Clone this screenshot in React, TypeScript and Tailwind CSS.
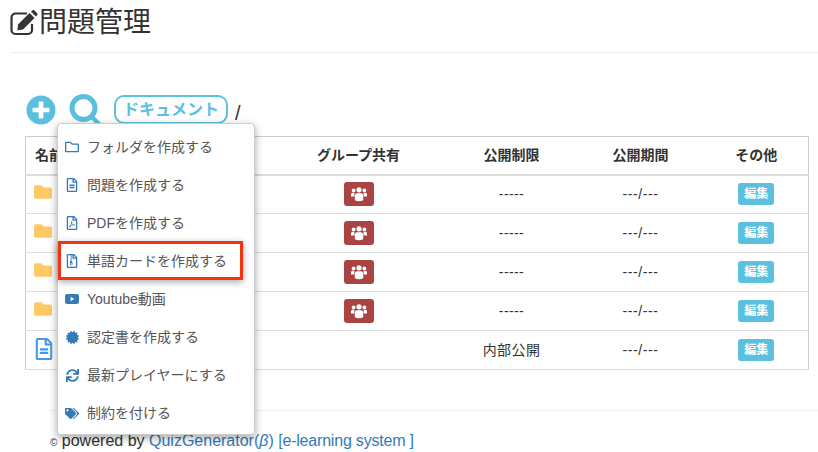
import React from 'react';
import {
  FaCertificate,
  FaFolder,
  FaPlusCircle,
  FaRegFileAlt,
  FaRegFileArchive,
  FaRegFilePdf,
  FaRegFolder,
  FaSync,
  FaTags,
} from 'react-icons/fa';

const font = "font-['Liberation_Sans','Noto_Sans_CJK_JP',sans-serif]";

function EditIcon() {
  return (
    <svg width="28" height="26" viewBox="0 0 28 26" className="shrink-0 text-[#333]">
      <path
        d="M17 3.5H5.5A4 4 0 0 0 1.5 7.5V20A4 4 0 0 0 5.5 24H18A4 4 0 0 0 22 20V14"
        fill="none"
        stroke="currentColor"
        strokeWidth="2.2"
      />
      <path d="M8 14.5 19.5 3l5 5L13 19.5l-5.5 .8z" fill="currentColor" />
      <path d="M21 1.5l1.2-1a1.6 1.6 0 0 1 2.2 0l2.6 2.6a1.6 1.6 0 0 1 0 2.2l-1.1 1.2z" fill="currentColor" />
    </svg>
  );
}

function SearchIcon() {
  return (
    <svg width="36" height="36" viewBox="0 0 36 36" className="ml-[13px] shrink-0 text-[#5bc0de]">
      <circle cx="14.5" cy="14" r="11.5" fill="none" stroke="currentColor" strokeWidth="5" />
      <path d="M23 23 34 34" stroke="currentColor" strokeWidth="4.5" />
    </svg>
  );
}

function UsersIcon() {
  return (
    <svg width="16" height="15" viewBox="0 0 16 15" fill="currentColor">
      <circle cx="2.6" cy="3.4" r="1.9" />
      <circle cx="13.4" cy="3.4" r="1.9" />
      <circle cx="8" cy="2.8" r="2.6" />
      <path d="M0 9.5V7.5C0 6.4 .8 5.8 1.8 5.8H3.4V9.5H1.5Q.4 9.5 0 9.5z" />
      <path d="M16 9.5V7.5C16 6.4 15.2 5.8 14.2 5.8H12.6V9.5z" />
      <path d="M3.8 13.2V9C3.8 7.2 4.8 6.2 6 6.2H10C11.2 6.2 12.2 7.2 12.2 9V13.2Q8 15.2 3.8 13.2z" />
    </svg>
  );
}

function VideoIcon({ size }: { size: number }) {
  return (
    <svg width={size} height={size} viewBox="0 0 14 14">
      <rect x="0" y="2" width="14" height="10" rx="2.2" fill="currentColor" />
      <path d="M5.6 4.8 9.4 7 5.6 9.2z" fill="#fff" />
    </svg>
  );
}

const menuItems = [
  { icon: FaRegFolder, size: 14, label: 'フォルダを作成する' },
  { icon: FaRegFileAlt, size: 14, label: '問題を作成する' },
  { icon: FaRegFilePdf, size: 14, label: 'PDFを作成する' },
  { icon: FaRegFileArchive, size: 14, label: '単語カードを作成する', marked: true },
  { icon: VideoIcon, size: 14, label: 'Youtube動画' },
  { icon: FaCertificate, size: 13, label: '認定書を作成する' },
  { icon: FaSync, size: 13, label: '最新プレイヤーにする' },
  { icon: FaTags, size: 15, label: '制約を付ける' },
];

const rows = [
  { kind: 'folder', limit: '-----' },
  { kind: 'folder', limit: '-----' },
  { kind: 'folder', limit: '-----' },
  { kind: 'folder', limit: '-----' },
  { kind: 'file', limit: '内部公開' },
];

function CreateMenu() {
  return (
    <ul className="absolute left-[57px] top-[123px] z-10 w-[198px] rounded border border-[#ccc] bg-white pt-[4px] pb-[2px] shadow-[0_3px_8px_rgba(0,0,0,0.35)]">
      {menuItems.map((item) => (
        <li key={item.label} className="relative flex h-[38px] items-center pl-[7px] text-[14px] text-[#555]">
          <span className="flex w-[22px] justify-center pr-[8px] text-[#337ab7]">
            <item.icon size={item.size} />
          </span>
          <span>{item.label}</span>
          {item.marked && (
            <span className="absolute left-0 top-[-1px] h-[39px] w-[185px] border-[3px] border-[#f5310f] shadow-[0_2px_7px_rgba(0,0,0,0.35)]" />
          )}
        </li>
      ))}
    </ul>
  );
}

export default function App() {
  return (
    <div className={`${font} relative h-[452px] w-[818px] overflow-hidden bg-white text-[#333]`}>
      <div className="ml-[10px] flex h-[53px] items-start gap-px border-b border-[#eee] pt-[6px]">
        <span className="mt-[4px]">
          <EditIcon />
        </span>
        <h1 className="text-[28px] leading-[34px] font-normal">問題管理</h1>
      </div>

      <div className="ml-[26px] mt-[41px] flex h-[42px] items-start">
        <FaPlusCircle size={30} className="mt-px text-[#5bc0de]" />
        <SearchIcon />
        <span className="ml-[9px] mt-px flex h-[29px] w-[114px] items-center justify-center rounded-[10px] border-[2px] border-[#5bc0de] text-[16px] font-bold text-[#5bc0de]">
          ドキュメント
        </span>
        <span className="ml-[7px] mt-[4px] text-[20px]">/</span>
      </div>

      <table className="ml-[25px] w-[783px] table-fixed border-collapse border border-[#ccc] text-[14px]">
        <colgroup>
          <col className="w-[245px]" />
          <col className="w-[176px]" />
          <col className="w-[130px]" />
          <col className="w-[128px]" />
          <col className="w-[104px]" />
        </colgroup>
        <thead>
          <tr className="h-[38px] border-b-2 border-[#ddd] font-bold">
            <th className="pl-[9px] text-left">名前</th>
            <th>グループ共有</th>
            <th>公開制限</th>
            <th>公開期間</th>
            <th>その他</th>
          </tr>
        </thead>
        <tbody>
          {rows.map((row, i) => (
            <tr key={i} className="h-[39px] border-b border-[#ddd] text-center">
              <td className="pl-[8px] text-left">
                {row.kind === 'folder' ? (
                  <FaFolder size={18} className="-mt-[5px] text-[#ffc966]" />
                ) : (
                  <FaRegFileAlt size={22} className="-ml-px -mt-[2px] text-[#3d9be9]" />
                )}
              </td>
              <td>
                {row.kind === 'folder' && (
                  <span className="inline-flex h-[24px] w-[30px] items-center justify-center rounded-[3px] bg-[#a94442] align-middle text-white">
                    <UsersIcon />
                  </span>
                )}
              </td>
              <td className="tracking-[0.4px]">{row.limit}</td>
              <td className="tracking-[0.6px]">---/---</td>
              <td>
                <span className="inline-flex h-[22px] w-[36px] items-center justify-center rounded-[3px] bg-[#5bc0de] align-middle text-[12px] font-bold text-white">
                  編集
                </span>
              </td>
            </tr>
          ))}
        </tbody>
      </table>

      <CreateMenu />

      <footer className="ml-[50px] mt-[40px] border-t border-[#eee] pt-[20px] text-[16px] leading-[20px]">
        <span className="text-[10px]">©</span> powered by{' '}
        <span className="text-[#337ab7]">
          QuizGenerator(<i>β</i>) <span className="tracking-[-0.2px]">[e-learning system ]</span>
        </span>
      </footer>
    </div>
  );
}
